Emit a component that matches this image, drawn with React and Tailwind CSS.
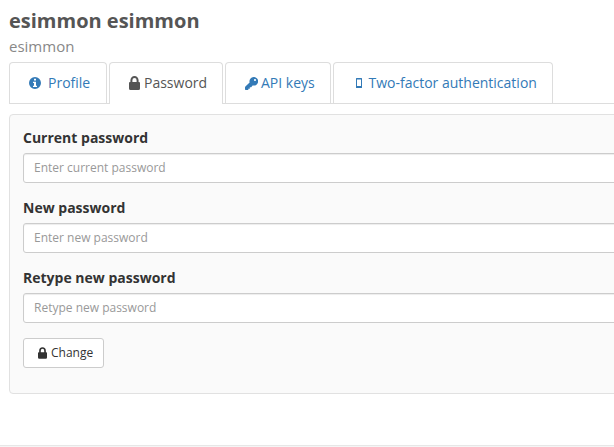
import React from 'react';

function InfoIcon({ className }) {
  return (
    <svg viewBox="0 0 12 12" className={className} fill="currentColor">
      <path fillRule="evenodd" d="M6 0a6 6 0 1 0 0 12A6 6 0 0 0 6 0ZM5 1.8h2v1.8H5ZM4 4.8h3v3.9h1V10H4V8.700h1V6H4Z" />
    </svg>
  );
}

function LockIcon({ className }) {
  return (
    <svg viewBox="0 0 11 14" className={className} fill="currentColor">
      <path fillRule="evenodd" d="M1.400 6V4.300a4.100 4.300 0 0 1 8.200 0V6H10q1 0 1 1v5.500Q11 14 9.500 14h-8Q0 14 0 12.500V7q0-1 1-1ZM3.400 6h4.200V4.300a2.100 2.400 0 0 0-4.200 0Z" />
    </svg>
  );
}

function KeyIcon({ className }) {
  return (
    <svg viewBox="0 0 13 13" className={className} fill="currentColor">
      <path fillRule="evenodd" d="M8.700 0a4.300 4.300 0 0 0-4.100 5.400L.4 9.500Q0 9.900 0 10.400V12.300q0 .7.7.7H3.300v-1.300H4.800V10.200H6.200L7.600 8.400A4.300 4.300 0 1 0 8.700 0ZM10 1.900a1.100 1.100 0 1 1 0 2.200 1.100 1.100 0 0 1 0-2.200Z" />
    </svg>
  );
}

function PhoneIcon({ className }) {
  return (
    <svg viewBox="0 0 6 10" className={className} fill="currentColor">
      <path fillRule="evenodd" d="M.5 0h5q.5 0 .5.500v9q0 .5-.5.500h-5Q0 10 0 9.500v-9Q0 0 .5 0ZM1 1.500v6.500h4V1.500Z" />
    </svg>
  );
}

const tabs = [
  { label: 'Profile', Icon: InfoIcon, width: 'w-[98px]', pad: 'pl-[19px]', icon: 'w-3 h-3 mr-[7px]' },
  { label: 'Password', Icon: LockIcon, width: 'w-[114px]', pad: 'pl-[19px]', icon: 'w-[11px] h-[14px] mr-[4px]', active: true },
  { label: 'API keys', Icon: KeyIcon, width: 'w-[106px]', pad: 'pl-[19px]', icon: 'w-[13px] h-[13px] mr-[3px]' },
  { label: 'Two-factor authentication', Icon: PhoneIcon, width: 'w-[220px]', pad: 'pl-[22px]', icon: 'w-[6px] h-[10px] mr-[6.5px]' },
];

const fields = [
  { id: 'current', label: 'Current password', placeholder: 'Enter current password' },
  { id: 'new', label: 'New password', placeholder: 'Enter new password' },
  { id: 'retype', label: 'Retype new password', placeholder: 'Retype new password' },
];

export default function App() {
  return (
    <div className="flex h-[447px] w-full flex-col overflow-hidden bg-white pl-[9px] font-['Open_Sans','Noto_Sans',sans-serif] text-[#333]">
      <header className="h-[62px] shrink-0 pt-[9px]">
        <h1 className="text-[20px] leading-[24px] font-bold text-[#555]">esimmon esimmon</h1>
        <p className="mt-[3px] text-[15px] leading-[20px] text-[#888]">esimmon</p>
      </header>
      <nav className="flex h-[42px] shrink-0 gap-[2px] border-b border-[#ddd]">
        {tabs.map(({ label, Icon, width, pad, icon, active }) => (
          <a
            key={label}
            className={`flex shrink-0 items-center whitespace-nowrap rounded-t-[4px] border border-b-0 border-[#ddd] text-[14px] leading-[20px] ${width} ${pad} ${active ? '-mb-px bg-white pb-px text-[#555]' : 'text-[#337ab7]'}`}
          >
            <Icon className={`shrink-0 ${icon}`} />
            {label}
          </a>
        ))}
      </nav>
      <form className="mt-[10px] -mr-5 h-[280px] shrink-0 rounded-[4px] border border-[#e1e1e1] bg-[#fafafa] pt-[13px] pl-[13px]">
        {fields.map(({ id, label, placeholder }) => (
          <div key={id} className="h-[70px]">
            <label htmlFor={id} className="mb-[5px] block text-[14px] leading-[20px] font-bold">{label}</label>
            <input
              id={id}
              type="password"
              placeholder={placeholder}
              className="block h-[30px] w-full rounded-[3px] border border-[#ccc] bg-white px-[10px] pt-0 pb-px text-[12px] leading-[18px] shadow-[inset_0_1px_1px_rgba(0,0,0,0.075)] placeholder:text-[#999]"
            />
          </div>
        ))}
        <button type="button" className="flex h-[30px] w-[81px] items-center rounded-[3px] border border-[#ccc] bg-white pl-[14px] text-[12px] leading-[18px]">
          <LockIcon className="mr-[4px] h-[12px] w-[9px] shrink-0" />
          Change
        </button>
      </form>
      <footer className="mt-[51px] -ml-[9px] h-[2px] shrink-0 border-t border-[#e7e7e7] bg-[#f5f5f5]" />
    </div>
  );
}
